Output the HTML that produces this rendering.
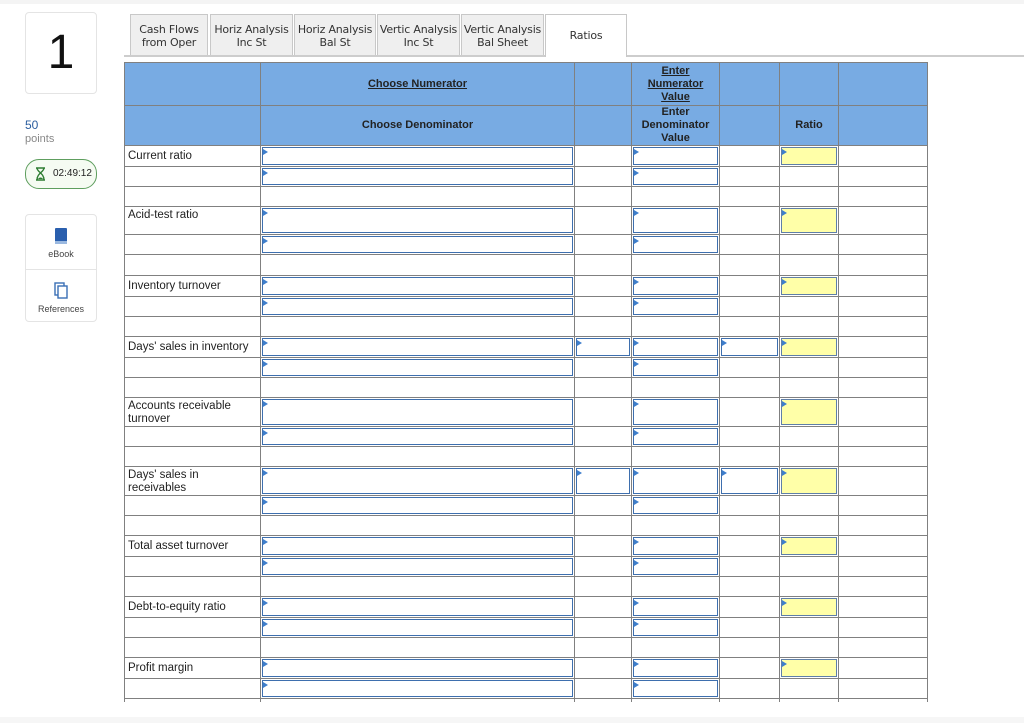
<!DOCTYPE html>
<html><head><meta charset="utf-8"><style>
*{box-sizing:border-box;margin:0;padding:0}
body{width:1024px;height:723px;background:#fff;font-family:"Liberation Sans",Arial,sans-serif;position:relative;overflow:hidden;color:#333}
.topline{position:absolute;left:0;top:0;width:1024px;height:4px;background:#f4f4f4}
.botline{position:absolute;left:0;top:717px;width:1024px;height:6px;background:#f6f6f6;z-index:6}
.qnum{position:absolute;left:25px;top:12px;width:72px;height:82px;border:1px solid #e4e4e4;border-radius:4px;font-size:48px;text-align:center;line-height:80px;color:#111}
.pts{position:absolute;left:25px;top:118px;font-size:12px;color:#2a5d9f}
.pts span{display:block;color:#888;font-size:11px;margin-top:1px}
.timer{position:absolute;left:25px;top:159px;width:72px;height:30px;border:1.5px solid #5e9e5e;border-radius:14px;background:#f5fbf2;font-size:10px;color:#222;line-height:27px;padding-left:27px}
.timer svg{position:absolute;left:9px;top:7px}
.tools{position:absolute;left:25px;top:214px;width:72px;height:108px;border:1px solid #e4e4e4;border-radius:4px}
.tools div{height:54px;text-align:center;font-size:9px;color:#444;position:relative;padding-top:34px}
.tools div+div{border-top:1px solid #e4e4e4}
.tools svg{position:absolute;left:27px;top:12px}
.tab{position:absolute;top:14px;height:42px;background:#efefef;border:1px solid #c8c8c8;border-bottom:none;font-family:"DejaVu Sans",Verdana,sans-serif;font-size:11px;text-align:center;line-height:13px;padding-top:8px;color:#333;white-space:nowrap;letter-spacing:-0.2px}
.tab.act{background:#fff;top:14px;height:43px;padding-top:14px;z-index:2}
.tabline{position:absolute;left:124px;top:55px;width:900px;height:2px;background:#cdcdcd}
table{position:absolute;left:124px;top:62px;border-collapse:collapse;table-layout:fixed;width:803px}
td{border:1px solid #808080;font-size:11.5px;color:#222;padding:0 3px;line-height:13px;position:relative;vertical-align:middle}
tr.h td{background:#78abe3;text-align:center;font-weight:bold;color:#222;font-size:11px}
tr.h td u{text-decoration:underline}
.in{position:absolute;left:1px;top:1px;right:1px;bottom:1px;border:1.5px solid #3e6fae;background:#fff}
.in:before{content:"";position:absolute;left:0;top:1px;border-left:5px solid #3e7ecb;border-top:3px solid transparent;border-bottom:3px solid transparent}
.y{background:#ffffa8;border-color:#5f7fa8}
.lab{vertical-align:top;padding-top:2px}
.cover{position:absolute;left:0;top:702px;width:1024px;height:21px;background:#fff;z-index:5}
</style></head><body>
<div class="topline"></div>
<div class="qnum">1</div>
<div class="pts">50<span>points</span></div>
<div class="timer"><svg width="11" height="14" viewBox="0 0 11 14"><path d="M1 1h9M1 13h9M2 1c0 4 7 5 7 12M9 1c0 4-7 5-7 12" stroke="#2e7d32" stroke-width="1.4" fill="none"/><path d="M3 12c1-2 4-2 5 0z" fill="#2e7d32"/></svg>02:49:12</div>
<div class="tools"><div><svg width="16" height="18"><rect x="2" y="1" width="12" height="15" rx="1" fill="#2a5fae"/><rect x="2" y="14" width="12" height="3" fill="#9bb9e0"/></svg>eBook</div><div><svg width="16" height="18"><rect x="2" y="1" width="9" height="12" fill="#fff" stroke="#3a6fb5" stroke-width="1.4"/><rect x="5" y="4" width="9" height="12" fill="#fff" stroke="#3a6fb5" stroke-width="1.4"/></svg>References</div></div>
<div class="tab" style="left:130px;width:78px">Cash Flows<br>from Oper</div>
<div class="tab" style="left:210px;width:83px">Horiz Analysis<br>Inc St</div>
<div class="tab" style="left:294px;width:82px">Horiz Analysis<br>Bal St</div>
<div class="tab" style="left:377px;width:83px">Vertic Analysis<br>Inc St</div>
<div class="tab" style="left:461px;width:83px">Vertic Analysis<br>Bal Sheet</div>
<div class="tab act" style="left:545px;width:82px">Ratios</div>
<div class="tabline"></div>
<table>
<colgroup><col style="width:136px"><col style="width:314px"><col style="width:57px"><col style="width:88px"><col style="width:60px"><col style="width:59px"><col style="width:89px"></colgroup>
<tr class="h" style="height:43px"><td></td><td><u>Choose Numerator</u></td><td></td><td><u>Enter Numerator Value</u></td><td></td><td></td><td></td></tr>
<tr class="h" style="height:40px"><td></td><td>Choose Denominator</td><td></td><td>Enter Denominator Value</td><td></td><td>Ratio</td><td></td></tr>

<tr style="height:21px"><td>Current ratio</td><td><div class="in"></div></td><td></td><td><div class="in"></div></td><td></td><td><div class="in y"></div></td><td></td></tr>
<tr style="height:20px"><td></td><td><div class="in"></div></td><td></td><td><div class="in"></div></td><td></td><td></td><td></td></tr>
<tr style="height:20px"><td></td><td></td><td></td><td></td><td></td><td></td><td></td></tr>

<tr style="height:28px"><td class="lab">Acid-test ratio</td><td><div class="in"></div></td><td></td><td><div class="in"></div></td><td></td><td><div class="in y"></div></td><td></td></tr>
<tr style="height:20px"><td></td><td><div class="in"></div></td><td></td><td><div class="in"></div></td><td></td><td></td><td></td></tr>
<tr style="height:21px"><td></td><td></td><td></td><td></td><td></td><td></td><td></td></tr>

<tr style="height:21px"><td>Inventory turnover</td><td><div class="in"></div></td><td></td><td><div class="in"></div></td><td></td><td><div class="in y"></div></td><td></td></tr>
<tr style="height:20px"><td></td><td><div class="in"></div></td><td></td><td><div class="in"></div></td><td></td><td></td><td></td></tr>
<tr style="height:20px"><td></td><td></td><td></td><td></td><td></td><td></td><td></td></tr>

<tr style="height:21px"><td>Days' sales in inventory</td><td><div class="in"></div></td><td><div class="in"></div></td><td><div class="in"></div></td><td><div class="in"></div></td><td><div class="in y"></div></td><td></td></tr>
<tr style="height:20px"><td></td><td><div class="in"></div></td><td></td><td><div class="in"></div></td><td></td><td></td><td></td></tr>
<tr style="height:20px"><td></td><td></td><td></td><td></td><td></td><td></td><td></td></tr>

<tr style="height:28px"><td class="lab">Accounts receivable turnover</td><td><div class="in"></div></td><td></td><td><div class="in"></div></td><td></td><td><div class="in y"></div></td><td></td></tr>
<tr style="height:20px"><td></td><td><div class="in"></div></td><td></td><td><div class="in"></div></td><td></td><td></td><td></td></tr>
<tr style="height:20px"><td></td><td></td><td></td><td></td><td></td><td></td><td></td></tr>

<tr style="height:28px"><td class="lab">Days' sales in receivables</td><td><div class="in"></div></td><td><div class="in"></div></td><td><div class="in"></div></td><td><div class="in"></div></td><td><div class="in y"></div></td><td></td></tr>
<tr style="height:20px"><td></td><td><div class="in"></div></td><td></td><td><div class="in"></div></td><td></td><td></td><td></td></tr>
<tr style="height:20px"><td></td><td></td><td></td><td></td><td></td><td></td><td></td></tr>

<tr style="height:21px"><td>Total asset turnover</td><td><div class="in"></div></td><td></td><td><div class="in"></div></td><td></td><td><div class="in y"></div></td><td></td></tr>
<tr style="height:20px"><td></td><td><div class="in"></div></td><td></td><td><div class="in"></div></td><td></td><td></td><td></td></tr>
<tr style="height:20px"><td></td><td></td><td></td><td></td><td></td><td></td><td></td></tr>

<tr style="height:21px"><td>Debt-to-equity ratio</td><td><div class="in"></div></td><td></td><td><div class="in"></div></td><td></td><td><div class="in y"></div></td><td></td></tr>
<tr style="height:20px"><td></td><td><div class="in"></div></td><td></td><td><div class="in"></div></td><td></td><td></td><td></td></tr>
<tr style="height:20px"><td></td><td></td><td></td><td></td><td></td><td></td><td></td></tr>

<tr style="height:21px"><td>Profit margin</td><td><div class="in"></div></td><td></td><td><div class="in"></div></td><td></td><td><div class="in y"></div></td><td></td></tr>
<tr style="height:20px"><td></td><td><div class="in"></div></td><td></td><td><div class="in"></div></td><td></td><td></td><td></td></tr>
<tr style="height:20px"><td></td><td></td><td></td><td></td><td></td><td></td><td></td></tr>
</table>
<div class="cover"></div>
<div class="botline"></div>
</body></html>
